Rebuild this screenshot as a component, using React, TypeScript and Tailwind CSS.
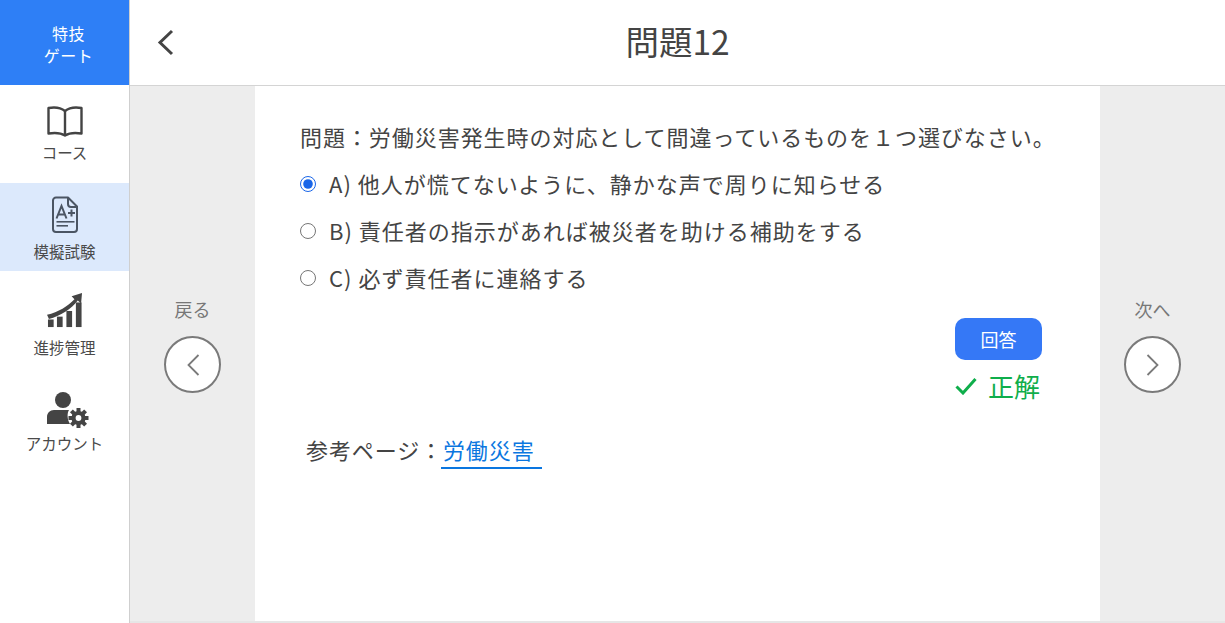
const font = "font-['Noto_Sans_CJK_JP','Noto_Sans',sans-serif]";

const BookIcon = () => (
  <svg width="38" height="32" viewBox="0 0 38 32" fill="none" stroke="#444" strokeWidth="2.4" strokeLinejoin="round">
    <path d="M19 6C15 2.800 8 2 2.500 3v25.500C8 27.600 15 28 19 30.500c4-2.500 11-2.900 16.500-2V3C30 2 23 2.800 19 6z" />
    <path d="M19 6v24" />
  </svg>
);

const TestIcon = () => (
  <svg width="28" height="38" viewBox="0 0 28 38" fill="none" stroke="#4b5563" strokeWidth="2">
    <path d="M5 1.500h12l9 9V33a3 3 0 0 1-3 3H5a3 3 0 0 1-3-3V4.500a3 3 0 0 1 3-3z" strokeLinejoin="round" />
    <path d="M17 1.500V8a3 3 0 0 0 3 3h6" />
    <path d="M5.500 22.500 10.500 10l5 12.500M7.300 18.500h6.400" strokeWidth="2" />
    <path d="M17 17h7M20.500 13.500v7" strokeWidth="2" />
    <path d="M5.500 25.800H23.500" strokeWidth="1.600" />
    <path d="M5.500 29.800H17" strokeWidth="1.600" />
  </svg>
);

const ChartIcon = () => (
  <svg width="36" height="35" viewBox="0 0 38 37" fill="#444">
    <rect x="1" y="28" width="6" height="8" />
    <rect x="10.500" y="25" width="6" height="11" />
    <rect x="20.500" y="19" width="6" height="17" />
    <rect x="30.500" y="10" width="6" height="26" />
    <path d="M0 23C12 20 22 14 29 6.500L26 3.500 37 0 36 11 32.500 8C26 17 14 24.500 2 27.500z" />
  </svg>
);

const gearTeeth = [0, 45, 90, 135, 180, 225, 270, 315];

const AccountIcon = () => (
  <svg className="ml-[6px]" width="42" height="36" viewBox="0 0 42 36" fill="#444">
    <circle cx="16" cy="8" r="8" />
    <path d="M0 32v-7c0-4 3-7 7-7h15c-2 3-2 9 1 14z" />
    <circle cx="31.500" cy="26" r="5" fill="none" stroke="#444" strokeWidth="4.200" />
    {gearTeeth.map((angle) => (
      <rect key={angle} x="29.500" y="16" width="4" height="4" transform={`rotate(${angle} 31.500 26)`} />
    ))}
  </svg>
);

const NavItem = ({
  icon,
  label,
  className,
  labelClassName,
}: {
  icon: React.ReactNode;
  label: string;
  className: string;
  labelClassName: string;
}) => (
  <div className={`flex flex-col items-center ${className}`}>
    <div className="flex h-[38px] items-center justify-center">{icon}</div>
    <span className={`text-[15.5px] leading-[20px] text-[#4a4a4a] ${labelClassName}`}>{label}</span>
  </div>
);

const PageButton = ({ label, direction }: { label: string; direction: "left" | "right" }) => (
  <div className="flex flex-col items-center">
    <span className="mb-[14px] text-[18px] leading-[26px] text-[#777]">{label}</span>
    <div className="flex h-[57px] w-[57px] items-center justify-center rounded-full border-2 border-[#7a7a7a] bg-white">
      <svg width="14" height="24" viewBox="0 0 14 24" fill="none" stroke="#7a7a7a" strokeWidth="1.800">
        <path d={direction === "left" ? "M12.500 2 2.500 12l10 10" : "M1.500 2l10 10-10 10"} />
      </svg>
    </div>
  </div>
);

const choices = [
  { text: "A) 他人が慌てないように、静かな声で周りに知らせる", checked: true },
  { text: "B) 責任者の指示があれば被災者を助ける補助をする", checked: false },
  { text: "C) 必ず責任者に連絡する", checked: false },
];

export default function App() {
  return (
    <div className={`relative flex h-[623px] w-[1225px] overflow-hidden bg-white ${font}`}>
      <aside className="flex w-[130px] shrink-0 flex-col border-r border-[#cfcfcf]">
        <div className="flex h-[85px] shrink-0 items-center justify-center bg-[#2e7ff6] pl-[8px] pt-[3px] text-center text-[16px] leading-[22px] tracking-[0.5px] text-white">
          特技
          <br />
          ゲート
        </div>
        <NavItem icon={<BookIcon />} label="コース" className="h-[98px] pt-[17px]" labelClassName="mt-[2px]" />
        <NavItem icon={<TestIcon />} label="模擬試験" className="h-[88px] bg-[#dce9fc] pt-[13px]" labelClassName="mt-[7px]" />
        <NavItem icon={<ChartIcon />} label="進捗管理" className="h-[96px] pt-[20px]" labelClassName="mt-[8px]" />
        <NavItem icon={<AccountIcon />} label="アカウント" className="pt-[24px]" labelClassName="mt-[4px]" />
      </aside>

      <div className="flex min-w-0 flex-1 flex-col">
        <header className="flex h-[86px] shrink-0 items-center justify-center border-b border-[#d4d4d4] pb-[3px]">
          <svg className="absolute left-[157px] top-[29px]" width="18" height="27" viewBox="0 0 18 27" fill="none" stroke="#444" strokeWidth="3">
            <path d="M15 2 3 13.500 15 25" />
          </svg>
          <h1 className="text-[33.5px] leading-[44px] text-[#444]">問題12</h1>
        </header>

        <div className="flex flex-1 border-b-2 border-[#e6e6e6] bg-[#ededed]">
          <div className="flex w-[125px] shrink-0 justify-center pt-[210px]">
            <PageButton label="戻る" direction="left" />
          </div>

          <main className="min-w-0 flex-1 bg-white pl-[45px] pr-[58px] pt-[33px]">
            <p className="whitespace-nowrap text-[22px] leading-[34px] tracking-[0.95px] text-[#444]">
              {"問題\uFF1A労働災害発生時の対応として間違っているものを\uFF11つ選びなさい。"}
            </p>
            <div className="mt-[13px] flex flex-col gap-[13px]">
              {choices.map((choice) => (
                <label key={choice.text} className="flex h-[34px] items-center gap-[13px] text-[22px] tracking-[1px] text-[#444]">
                  <input
                    type="radio"
                    name="answer"
                    defaultChecked={choice.checked}
                    className="mt-[2px] h-[16px] w-[16px] accent-[#1a66e8]"
                  />
                  {choice.text}
                </label>
              ))}
            </div>

            <div className="mt-[24px] flex flex-col items-end">
              <button className="h-[42px] w-[87px] rounded-[10px] bg-[#3578f6] text-[18px] text-white">回答</button>
              <div className="mt-[5px] flex items-center gap-[11px] pr-[2px] text-[26px] leading-[42px] text-[#0fae4b]">
                <svg width="22" height="18" viewBox="0 0 22 18" fill="none" stroke="#0fae4b" strokeWidth="3">
                  <path d="M1.500 9.500 8 16 20.500 2" />
                </svg>
                正解
              </div>
            </div>

            <div className="mt-[24px] flex items-start pl-[6px] text-[22px] leading-[36px] tracking-[0.9px] text-[#444]">
              <span>{"参考ページ\uFF1A"}</span>
              <a className="-ml-[2px] border-b-2 border-[#0a76e0] pl-[2px] pr-[7px] text-[#0a76e0]">労働災害</a>
            </div>
          </main>

          <div className="flex w-[125px] shrink-0 justify-center pr-[20px] pt-[210px]">
            <PageButton label="次へ" direction="right" />
          </div>
        </div>
      </div>
    </div>
  );
}
